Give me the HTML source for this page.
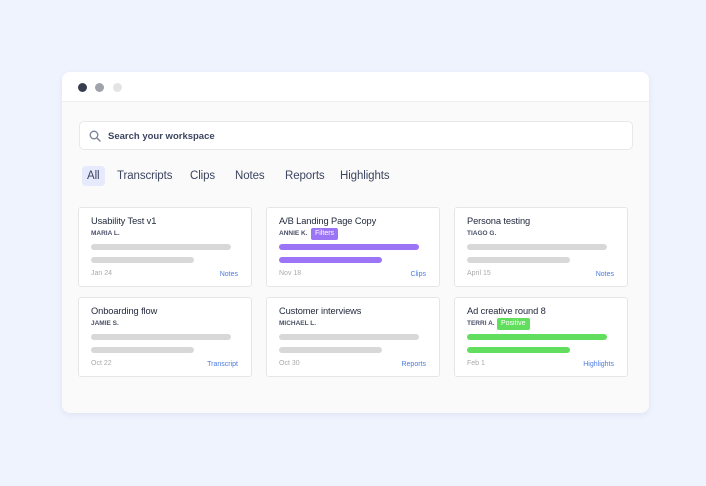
<!DOCTYPE html>
<html><head><style>
*{box-sizing:border-box;margin:0;padding:0}
body{width:706px;height:486px;background:#eef3fe;font-family:"Liberation Sans",sans-serif;position:relative;overflow:hidden}
.win{position:absolute;left:62px;top:72px;width:587px;height:341px;background:#fafafa;border-radius:8px;box-shadow:0 2px 6px rgba(60,70,120,.08);overflow:hidden}
.hdr{position:absolute;left:0;top:0;width:100%;height:30px;background:#fff;border-bottom:1px solid #efeff2}
.dot{position:absolute;top:11px;width:9px;height:9px;border-radius:50%}
.search{position:absolute;left:17px;top:49px;width:554px;height:29px;background:#fff;border:1px solid #e8e8ec;border-radius:5px}
.search span{position:absolute;left:28px;top:9px;font-size:9.5px;font-weight:bold;color:#3d4560}
.tab{position:absolute;top:98px;font-size:11.5px;color:#3d4560;letter-spacing:-0.1px}
.all{position:absolute;left:20px;top:94px;width:23px;height:20px;background:#e6eafc;border-radius:4px}
.card{position:absolute;width:174px;height:80px;background:#fff;border:1px solid #e6e6ea;border-radius:3px}
.t{position:absolute;left:12px;top:8px;font-size:9.3px;color:#222a3c;letter-spacing:-0.1px}
.a{position:absolute;left:12px;top:22px;font-size:6.5px;color:#4a5068;font-weight:bold}
.b{position:absolute;left:12px;height:6px;border-radius:3px;background:#d8d8d8}
.b1{top:36px;width:140px}.b2{top:49px;width:103px}
.d{position:absolute;left:12px;top:62px;font-size:7px;color:#aaa}
.l{position:absolute;right:13px;top:63px;font-size:7px;color:#4b7be0}
.badge{position:absolute;top:20px;height:12px;border-radius:2px;color:#fff;font-size:7px;padding:2px 4px 0}
</style></head><body>
<div class="win">
<div class="hdr">
<div class="dot" style="left:16px;background:#363d4f"></div>
<div class="dot" style="left:33px;background:#a0a3ab"></div>
<div class="dot" style="left:51px;background:#e4e4e6"></div>
</div>
<div class="search">
<svg style="position:absolute;left:9px;top:8px" width="12" height="12" viewBox="0 0 12 12"><circle cx="5" cy="5" r="3.8" fill="none" stroke="#7a8096" stroke-width="1.3"/><path d="M8 8l3 3" stroke="#7a8096" stroke-width="1.4" stroke-linecap="round"/></svg>
<span>Search your workspace</span>
</div>
<div class="all"></div>
<div class="tab" style="left:25px">All</div>
<div class="tab" style="left:55px">Transcripts</div>
<div class="tab" style="left:128px">Clips</div>
<div class="tab" style="left:173px">Notes</div>
<div class="tab" style="left:223px">Reports</div>
<div class="tab" style="left:278px">Highlights</div>

<div class="card" style="left:16px;top:135px"><div class="t">Usability Test v1</div><div class="a">MARIA L.</div><div class="b b1"></div><div class="b b2"></div><div class="d">Jan 24</div><div class="l">Notes</div></div>
<div class="card" style="left:204px;top:135px"><div class="t">A/B Landing Page Copy</div><div class="a">ANNIE K.</div><div class="badge" style="left:44px;background:#9c74f6">Filters</div><div class="b b1" style="background:#9c74f6"></div><div class="b b2" style="background:#9c74f6"></div><div class="d">Nov 18</div><div class="l">Clips</div></div>
<div class="card" style="left:392px;top:135px"><div class="t">Persona testing</div><div class="a">TIAGO G.</div><div class="b b1"></div><div class="b b2"></div><div class="d">April 15</div><div class="l">Notes</div></div>
<div class="card" style="left:16px;top:225px"><div class="t">Onboarding flow</div><div class="a">JAMIE S.</div><div class="b b1"></div><div class="b b2"></div><div class="d">Oct 22</div><div class="l">Transcript</div></div>
<div class="card" style="left:204px;top:225px"><div class="t">Customer interviews</div><div class="a">MICHAEL L.</div><div class="b b1"></div><div class="b b2"></div><div class="d">Oct 30</div><div class="l">Reports</div></div>
<div class="card" style="left:392px;top:225px"><div class="t">Ad creative round 8</div><div class="a">TERRI A.</div><div class="badge" style="left:42px;background:#62de5e">Positive</div><div class="b b1" style="background:#62de5e"></div><div class="b b2" style="background:#62de5e"></div><div class="d">Feb 1</div><div class="l">Highlights</div></div>
</div>
</body></html>
